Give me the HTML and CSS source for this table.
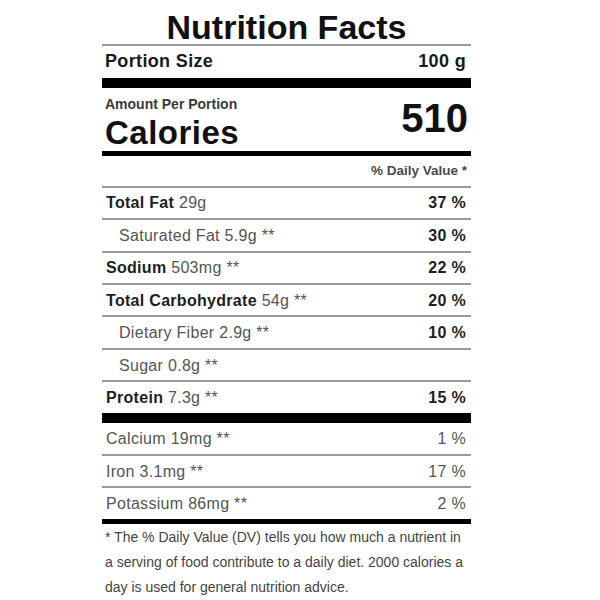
FILE: index.html
```html
<!DOCTYPE html>
<html lang="en">
<head>
<meta charset="utf-8">
<title>Nutrition Facts</title>
<link rel="stylesheet" href="styles.css">
</head>
<body>
<div class="label">
  <h1 class="title">Nutrition Facts</h1>
  <div class="portion"><span>Portion Size</span><span>100 g</span></div>
  <div class="calories">
    <div class="cal-left">
      <div class="amount">Amount Per Portion</div>
      <div class="cal-label">Calories</div>
    </div>
    <div class="cal-value">510</div>
  </div>
  <div class="dv-head">% Daily Value *</div>
  <div class="nutrients">
    <div class="row"><span><b>Total Fat</b> 29g</span><b>37 %</b></div>
    <div class="row sub"><span>Saturated Fat 5.9g **</span><b>30 %</b></div>
    <div class="row"><span><b>Sodium</b> 503mg **</span><b>22 %</b></div>
    <div class="row"><span><b>Total Carbohydrate</b> 54g **</span><b>20 %</b></div>
    <div class="row sub"><span>Dietary Fiber 2.9g **</span><b>10 %</b></div>
    <div class="row sub"><span>Sugar 0.8g **</span><span></span></div>
    <div class="row"><span><b>Protein</b> 7.3g **</span><b>15 %</b></div>
  </div>
  <div class="minerals">
    <div class="row first"><span>Calcium 19mg **</span><span>1 %</span></div>
    <div class="row"><span>Iron 3.1mg **</span><span>17 %</span></div>
    <div class="row"><span>Potassium 86mg **</span><span>2 %</span></div>
  </div>
  <p class="footnote">* The % Daily Value (DV) tells you how much a nutrient in a serving of food contribute to a daily diet. 2000 calories a day is used for general nutrition advice.</p>
</div>
</body>
</html>
```
FILE: styles.css
```css
html, body {
  margin: 0;
  padding: 0;
  background: #fff;
}

.label {
  width: 369px;
  margin-left: 102px;
  padding-top: 11px;
  font-family: "Liberation Sans", Arial, sans-serif;
  color: #222;
}

.title {
  margin: 0;
  font-size: 34px;
  line-height: 33px;
  font-weight: bold;
  text-align: center;
  color: #111;
  border-bottom: 2px solid #9a9a9a;
}

.portion {
  display: flex;
  justify-content: space-between;
  height: 30px;
  padding: 0 5px 2px 3px;
  line-height: 30px;
  font-size: 18px;
  letter-spacing: 0.35px;
  font-weight: bold;
  color: #1a1a1a;
  border-bottom: 10px solid #000;
}

.calories {
  display: flex;
  justify-content: space-between;
  height: 63px;
  padding: 0 3px 0 3px;
  border-bottom: 5px solid #000;
}

.amount {
  padding-top: 7.5px;
  font-size: 14px;
  line-height: 16px;
  font-weight: bold;
  color: #3a3a3a;
}

.cal-label {
  margin-top: 3.5px;
  font-size: 33px;
  line-height: 36px;
  letter-spacing: 0.5px;
  font-weight: bold;
  color: #111;
}

.cal-value {
  margin-top: 8px;
  font-size: 40px;
  line-height: 44px;
  font-weight: bold;
  color: #111;
}

.dv-head {
  height: 29.7px;
  line-height: 29.7px;
  padding-right: 4px;
  text-align: right;
  font-size: 13.5px;
  font-weight: bold;
  color: #4a4a4a;
}

.row {
  display: flex;
  justify-content: space-between;
  align-items: center;
  box-sizing: border-box;
  height: 32.43px;
  padding: 1px 5px 0 4px;
  border-top: 2px solid #9a9a9a;
  font-size: 16px;
  letter-spacing: 0.3px;
  color: #555;
}

.row b {
  color: #1e1e1e;
}

.row.sub {
  padding-left: 17px;
}

.minerals {
  border-top: 10px solid #000;
  border-bottom: 5px solid #000;
}

.minerals .row {
  height: 32.2px;
}

.minerals .row.first {
  border-top: none;
  height: 31.5px;
}

.footnote {
  margin: 0;
  padding: 1.5px 4px 0 3px;
  font-size: 14px;
  line-height: 25px;
  color: #444;
}
```
